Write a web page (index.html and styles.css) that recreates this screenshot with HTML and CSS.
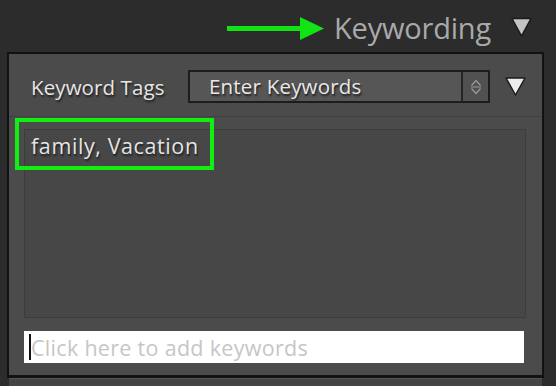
FILE: index.html
```html
<!DOCTYPE html>
<html lang="en">
<head>
    <meta charset="UTF-8">
    <title>Keywording</title>
    <link rel="stylesheet" href="styles.css">
</head>
<body>
    <header class="panel-header">
        <svg class="arrow" width="98" height="26" viewBox="0 0 98 26">
            <rect x="0" y="10" width="76" height="5" fill="#12e312"/>
            <polygon points="73,1 97,12.5 73,24" fill="#12e312"/>
        </svg>
        <span class="panel-title">Keywording</span>
        <svg class="collapse" width="21" height="21" viewBox="0 0 21 21">
            <polygon points="1,1.5 20,1.5 10.5,19" fill="#c4c4c4" stroke="#1a1a1a" stroke-width="1.5" stroke-linejoin="round"/>
        </svg>
    </header>

    <section class="panel">
        <div class="tags-row">
            <span class="tags-label">Keyword Tags</span>
            <div class="tags-select">
                <span class="select-value">Enter Keywords</span>
                <span class="select-spin">
                    <svg width="12" height="18" viewBox="0 0 12 18">
                        <polyline points="1.5,7.5 6,2.5 10.5,7.5" fill="none" stroke="#9a9a9a" stroke-width="1.2"/>
                        <line x1="1" y1="9" x2="11" y2="9" stroke="#9a9a9a" stroke-width="1"/>
                        <polyline points="1.5,10.5 6,15.5 10.5,10.5" fill="none" stroke="#9a9a9a" stroke-width="1.2"/>
                    </svg>
                </span>
            </div>
            <svg class="menu-arrow" width="21" height="20" viewBox="0 0 21 20">
                <polygon points="1,1 20,1 10.5,18" fill="#ececec" stroke="#1c1c1c" stroke-width="1.5" stroke-linejoin="round"/>
            </svg>
        </div>

        <div class="keyword-box">
            <span class="keyword-list">family, Vacation</span>
            <span class="highlight"></span>
        </div>

        <div class="keyword-input">
            <span class="caret"></span>
            <span class="placeholder">Click here to add keywords</span>
        </div>
    </section>
    <div class="next-panel"></div>
</body>
</html>
```

FILE: styles.css
```css
body {
    margin: 0;
    background-color: #2c2c2c;
    font-family: 'Open Sans', 'DejaVu Sans', sans-serif;
    width: 556px;
    height: 386px;
    overflow: hidden;
}

.panel-header {
    height: 52px;
    display: flex;
    align-items: center;
    justify-content: flex-end;
    padding-right: 24px;
    box-sizing: border-box;
}

.arrow {
    margin-right: 9px;
    margin-top: 6px;
}

.panel-title {
    color: #a9a9a9;
    font-size: 29px;
    letter-spacing: -0.2px;
    margin-top: 3px;
}

.collapse {
    margin-left: 20px;
    margin-top: 2px;
}

.panel {
    margin-left: 7px;
    width: 537px;
    box-sizing: border-box;
    border: 2px solid #121212;
    border-bottom-width: 3px;
    background-color: #4b4b4b;
    padding: 0 16px 12px 15px;
}

.tags-row {
    display: flex;
    align-items: center;
    padding: 16px 0 13px 22px;
    margin: 0 -16px 0 -15px;
    border-bottom: 1px solid #404040;
}

.tags-label {
    color: #e6e6e6;
    font-size: 20.5px;
    letter-spacing: 0.1px;
    text-shadow: 1px 2px 2px #1e1e1e;
    width: 157px;
}

.tags-select {
    display: flex;
    width: 302px;
    height: 33px;
    box-sizing: border-box;
    border: 2px solid #1d1d1d;
    background-color: #565656;
}

.select-value {
    flex: 1;
    color: #e8e8e8;
    font-size: 20.5px;
    letter-spacing: 0.2px;
    line-height: 29px;
    padding-left: 19px;
    text-shadow: 1px 2px 2px #1e1e1e;
    border-right: 2px solid #262626;
}

.select-spin {
    width: 25px;
    display: flex;
    align-items: center;
    justify-content: center;
    background-color: #515151;
}

.menu-arrow {
    margin-left: 15px;
}

.keyword-box {
    position: relative;
    margin-top: 12px;
    height: 189px;
    box-sizing: border-box;
    border: 1px solid #3c3c3c;
    background-color: #474747;
    padding: 1px 0 0 6px;
}

.keyword-list {
    color: #e4e4e4;
    font-size: 21.5px;
    letter-spacing: 0.6px;
    text-shadow: 1px 2px 2px #1e1e1e;
}

.highlight {
    position: absolute;
    left: -10px;
    top: -12px;
    width: 199px;
    height: 52px;
    box-sizing: border-box;
    border: 4px solid #12ee12;
}

.keyword-input {
    margin-top: 13px;
    width: 500px;
    height: 32px;
    background-color: #ffffff;
    display: flex;
    align-items: center;
    padding-left: 5px;
    box-sizing: border-box;
}

.caret {
    width: 2px;
    height: 26px;
    background-color: #111111;
}

.placeholder {
    color: #c6c6c6;
    font-size: 21.5px;
    letter-spacing: 0.3px;
}

.next-panel {
    margin-left: 9px;
    width: 533px;
    height: 20px;
    background-color: #444444;
    border-top: 1px solid #555555;
}
```
